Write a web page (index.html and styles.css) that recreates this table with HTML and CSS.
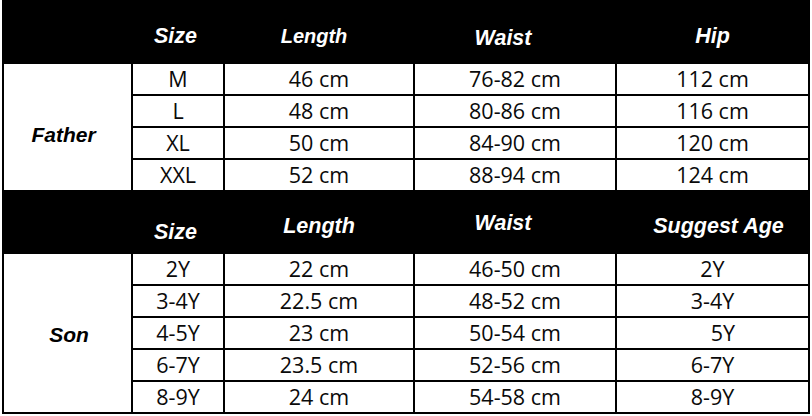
FILE: index.html
```html
<!DOCTYPE html>
<html lang="en">
<head>
<meta charset="utf-8">
<title>Size Chart</title>
<link rel="stylesheet" href="styles.css">
</head>
<body>
<div class="chart">
  <div class="hcell"></div>
  <div class="hcell h-size t1">Size</div>
  <div class="hcell h-length t1 small">Length</div>
  <div class="hcell h-waist t1w">Waist</div>
  <div class="hcell t1">Hip</div>

  <div class="group father">Father</div>
  <div class="cell">M</div><div class="cell">46 cm</div><div class="cell">76-82 cm</div><div class="cell">112 cm</div>
  <div class="cell">L</div><div class="cell">48 cm</div><div class="cell">80-86 cm</div><div class="cell">116 cm</div>
  <div class="cell">XL</div><div class="cell">50 cm</div><div class="cell">84-90 cm</div><div class="cell">120 cm</div>
  <div class="cell">XXL</div><div class="cell">52 cm</div><div class="cell">88-94 cm</div><div class="cell">124 cm</div>

  <div class="hcell"></div>
  <div class="hcell h-size t2s">Size</div>
  <div class="hcell t2">Length</div>
  <div class="hcell h-waist t2w">Waist</div>
  <div class="hcell h-age t2">Suggest Age</div>

  <div class="group son">Son</div>
  <div class="cell">2Y</div><div class="cell">22 cm</div><div class="cell">46-50 cm</div><div class="cell">2Y</div>
  <div class="cell">3-4Y</div><div class="cell">22.5 cm</div><div class="cell">48-52 cm</div><div class="cell">3-4Y</div>
  <div class="cell">4-5Y</div><div class="cell">23 cm</div><div class="cell">50-54 cm</div><div class="cell shift">5Y</div>
  <div class="cell">6-7Y</div><div class="cell">23.5 cm</div><div class="cell">52-56 cm</div><div class="cell">6-7Y</div>
  <div class="cell">8-9Y</div><div class="cell">24 cm</div><div class="cell">54-58 cm</div><div class="cell">8-9Y</div>
</div>
</body>
</html>
```
FILE: styles.css
```css
html, body {
  margin: 0;
  padding: 0;
  background: #fff;
}

.chart {
  margin-left: 2px;
  width: 804px;
  display: grid;
  grid-template-columns: 127px 90px 188px 200px 191px;
  grid-template-rows: 62px repeat(4, 30px) 60px repeat(5, 30px);
  gap: 2px;
  padding: 0 2px 2px 2px;
  background: #000;
}

.hcell {
  background: #000;
  color: #fff;
  font-family: "Liberation Sans", Arial, sans-serif;
  font-weight: bold;
  font-style: italic;
  font-size: 21.5px;
  line-height: 24px;
  text-align: center;
}

.hcell.small { font-size: 20px; }

.h-size { padding-right: 5px; }
.h-length { padding-right: 10px; }
.h-waist { padding-right: 24px; }
.h-age { padding-left: 12px; }

.t1 { padding-top: 24px; }
.t1w { padding-top: 26px; }
.t2 { padding-top: 22px; }
.t2s { padding-top: 28px; }
.t2w { padding-top: 19px; }

.group {
  background: #fff;
  color: #000;
  font-family: "Liberation Sans", Arial, sans-serif;
  font-weight: bold;
  font-style: italic;
  font-size: 21px;
  display: flex;
  align-items: center;
  justify-content: center;
}

.father {
  grid-row: span 4;
  padding-right: 8px;
  padding-top: 15px;
}

.son {
  grid-row: span 5;
  padding-left: 3px;
  padding-top: 4px;
}

.cell {
  background: #fff;
  color: #0a0a0a;
  font-family: "Open Sans", "DejaVu Sans", sans-serif;
  font-size: 21.5px;
  line-height: 30px;
  text-align: center;
  white-space: nowrap;
}

.cell.shift { padding-left: 21px; }
```
